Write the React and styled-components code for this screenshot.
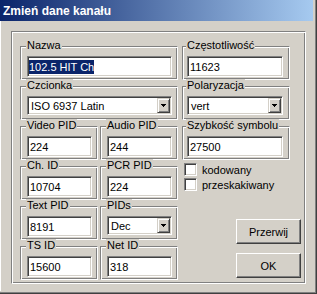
import { createGlobalStyle, styled } from 'styled-components'

const GlobalStyle = createGlobalStyle`
  html, body {
    margin: 0;
    padding: 0;
    background: #d4d0c8;
  }
`

const Window = styled.div`
  width: 317px;
  height: 294px;
  box-sizing: border-box;
  background: #d4d0c8;
  border-right: 1px solid #404040;
  border-bottom: 1px solid #404040;
  box-shadow: inset -1px -1px #808080;
  padding-right: 3px;
  font-family: "Liberation Sans", Arial, sans-serif;
  font-size: 11px;
  color: #000;
  overflow: hidden;
`

const TitleBar = styled.div`
  height: 21px;
  display: flex;
  align-items: center;
  padding-left: 3px;
  background: linear-gradient(to right, #0a246a, #a6caf0);
  color: #fff;
  font-weight: bold;
  font-size: 12px;
`

const Body = styled.div`
  padding: 10px 0 0 11px;
  box-shadow: inset 1px 0 #fff;
  height: 270px;
  box-sizing: border-box;
`

const etched = `
  border: 1px solid;
  border-color: #808080 #fff #fff #808080;
  box-shadow: inset 1px 1px #fff, inset -1px -1px #808080;
`

const sunken = `
  border: 1px solid;
  border-color: #808080 #fff #fff #808080;
  box-shadow: inset 1px 1px #404040, inset -1px -1px #d4d0c8;
  background: #fff;
`

const Panel = styled.div`
  ${etched}
  width: 295px;
  height: 253px;
  box-sizing: border-box;
  padding: 14px 0 0 8px;
  display: flex;
  gap: 4px;
`

const LeftGrid = styled.div`
  display: grid;
  grid-template-columns: 78px 78px;
  grid-auto-rows: 34px;
  column-gap: 2px;
  row-gap: 6px;
  align-content: start;
`

const RightCol = styled.div`
  width: 121px;
  display: flex;
  flex-direction: column;
`

const GroupStack = styled.div`
  display: flex;
  flex-direction: column;
  gap: 6px;
`

const Group = styled.div`
  ${etched}
  box-sizing: border-box;
  height: 34px;
  width: ${p => (p.$width ? `${p.$width}px` : 'auto')};
  grid-column: ${p => (p.$wide ? 'span 2' : 'auto')};
  padding: 0 ${p => p.$right}px 0 ${p => p.$left}px;
  display: flex;
  flex-direction: column;
`

const Legend = styled.span`
  align-self: flex-start;
  margin: -8px 0 4px -1px;
  padding: 0 1px;
  height: 13px;
  line-height: 13px;
  background: #d4d0c8;
  white-space: nowrap;
`

const Field = styled.div`
  ${sunken}
  height: 21px;
  box-sizing: border-box;
  display: flex;
  align-items: center;
  padding-left: 2px;
  white-space: nowrap;
  overflow: hidden;
`

const Selected = styled.span`
  margin-left: -1px;
  background: #0a246a;
  color: #fff;
  line-height: 14px;
`

const Combo = styled.div`
  ${sunken}
  height: 19px;
  box-sizing: border-box;
  padding: 1px;
  display: flex;
`

const ComboText = styled.div`
  flex: 1;
  display: flex;
  align-items: center;
  padding-left: 2px;
  white-space: nowrap;
`

const DropButton = styled.div`
  width: 13px;
  box-sizing: border-box;
  background: #d4d0c8;
  border: 1px solid;
  border-color: #d4d0c8 #404040 #404040 #d4d0c8;
  box-shadow: inset 1px 1px #fff, inset -1px -1px #808080;
  display: flex;
  align-items: center;
  justify-content: center;
`

const Checks = styled.div`
  margin-top: 3px;
  padding-left: 2px;
  display: flex;
  flex-direction: column;
  gap: 2px;
`

const CheckRow = styled.label`
  display: flex;
  align-items: center;
  gap: 5px;
  height: 13px;
`

const CheckBox = styled.span`
  ${sunken}
  width: 13px;
  height: 13px;
  box-sizing: border-box;
`

const Buttons = styled.div`
  margin-top: 28px;
  align-self: flex-end;
  margin-right: 2px;
  display: flex;
  flex-direction: column;
  gap: 9px;
`

const Button = styled.button`
  width: 65px;
  height: 25px;
  box-sizing: border-box;
  padding: 0;
  background: #d4d0c8;
  border: 1px solid;
  border-color: #fff #404040 #404040 #fff;
  box-shadow: inset -1px -1px #808080;
  font-family: inherit;
  font-size: 11px;
  color: #000;
`

const Arrow = () => (
  <svg width="5" height="3" viewBox="0 0 5 3" shapeRendering="crispEdges">
    <rect x="0" y="0" width="5" height="1" fill="#000" />
    <rect x="1" y="1" width="3" height="1" fill="#000" />
    <rect x="2" y="2" width="1" height="1" fill="#000" />
  </svg>
)

const Select = ({ value }) => (
  <Combo>
    <ComboText>{value}</ComboText>
    <DropButton><Arrow /></DropButton>
  </Combo>
)

const LeftBox = ({ label, wide, children }) => (
  <Group $left={6} $right={5} $wide={wide}>
    <Legend>{label}</Legend>
    {children}
  </Group>
)

const RightBox = ({ label, children }) => (
  <Group $left={4} $right={6} $width={108}>
    <Legend>{label}</Legend>
    {children}
  </Group>
)

const App = () => {
  return (
    <Window>
      <GlobalStyle />
      <TitleBar>Zmień dane kanału</TitleBar>
      <Body>
        <Panel>
          <LeftGrid>
            <LeftBox label="Nazwa" wide>
              <Field><Selected>102.5 HIT Ch</Selected></Field>
            </LeftBox>
            <LeftBox label="Czcionka" wide>
              <Select value="ISO 6937 Latin" />
            </LeftBox>
            <LeftBox label="Video PID"><Field>224</Field></LeftBox>
            <LeftBox label="Audio PID"><Field>244</Field></LeftBox>
            <LeftBox label="Ch. ID"><Field>10704</Field></LeftBox>
            <LeftBox label="PCR PID"><Field>224</Field></LeftBox>
            <LeftBox label="Text PID"><Field>8191</Field></LeftBox>
            <LeftBox label="PIDs"><Select value="Dec" /></LeftBox>
            <LeftBox label="TS ID"><Field>15600</Field></LeftBox>
            <LeftBox label="Net ID"><Field>318</Field></LeftBox>
          </LeftGrid>
          <RightCol>
            <GroupStack>
              <RightBox label="Częstotliwość"><Field>11623</Field></RightBox>
              <RightBox label="Polaryzacja"><Select value="vert" /></RightBox>
              <RightBox label="Szybkość symbolu"><Field>27500</Field></RightBox>
            </GroupStack>
            <Checks>
              <CheckRow><CheckBox />kodowany</CheckRow>
              <CheckRow><CheckBox />przeskakiwany</CheckRow>
            </Checks>
            <Buttons>
              <Button>Przerwij</Button>
              <Button>OK</Button>
            </Buttons>
          </RightCol>
        </Panel>
      </Body>
    </Window>
  )
}

export default App
